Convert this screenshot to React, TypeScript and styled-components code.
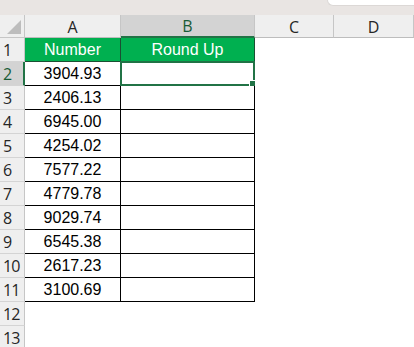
import React from 'react'
import styled, { createGlobalStyle, css } from 'styled-components'

const GlobalStyle = createGlobalStyle`
  html, body {
    margin: 0;
    padding: 0;
    background: #ffffff;
  }
  body {
    font-family: 'Liberation Sans', Arial, sans-serif;
    overflow: hidden;
  }
`

const green = '#217346'

const TopStrip = styled.div`
  height: 15px;
  background: #e9e5e3;
  display: flex;
  justify-content: flex-end;
  align-items: flex-start;
`

const SearchBox = styled.div`
  width: 86px;
  height: 5px;
  background: #ffffff;
  border: 1px solid #dcd8d6;
  border-top: none;
  border-right: none;
  border-bottom-left-radius: 6px;
`

const Sheet = styled.div`
  display: grid;
  grid-template-columns: 25px 96px 134px 79px 1fr;
  grid-template-rows: 23px repeat(13, 24px);
`

const Corner = styled.div`
  position: relative;
  background: #efefef;
  border-right: 1px solid #c6c6c6;
  border-bottom: 1px solid #c6c6c6;
  box-sizing: border-box;

  &::after {
    content: '';
    position: absolute;
    right: 3px;
    bottom: 3px;
    width: 0;
    height: 0;
    border-left: 14px solid transparent;
    border-bottom: 14px solid #bdbdbd;
  }
`

const ColHead = styled.div<{ $active?: boolean }>`
  box-sizing: border-box;
  display: flex;
  align-items: center;
  justify-content: center;
  font-family: 'Open Sans', 'Liberation Sans', sans-serif;
  font-size: 16px;
  color: #262626;
  background: #efefef;
  border-right: 1px solid #c6c6c6;
  border-bottom: 1px solid #bdbdbd;
  padding-top: 1px;

  ${p => p.$active && css`
    background: #d3d3d3;
    color: #185c37;
    border-bottom: 2px solid ${green};
  `}
`

const RowHead = styled.div<{ $active?: boolean }>`
  box-sizing: border-box;
  display: flex;
  align-items: center;
  padding-left: 3px;
  font-family: 'Open Sans', 'Liberation Sans', sans-serif;
  font-size: 16px;
  letter-spacing: -1px;
  color: #262626;
  background: #efefef;
  border-right: 1px solid #c6c6c6;
  border-bottom: 1px solid #d4d4d4;

  ${p => p.$active && css`
    background: #d3d3d3;
    color: #185c37;
    border-right: 2px solid ${green};
  `}
`

const Cell = styled.div<{ $kind?: 'head' | 'data' | 'blank' }>`
  position: relative;
  box-sizing: border-box;
  display: flex;
  align-items: center;
  justify-content: center;
  font-size: 16px;
  color: #000000;
  background: #ffffff;

  ${p => p.$kind === 'head' && css`
    background: #00b050;
    color: #ffffff;
    border-right: 1px solid #1b4f33;
    border-bottom: 1px solid #1b4f33;
  `}

  ${p => p.$kind === 'data' && css`
    border-right: 1px solid #000000;
    border-bottom: 1px solid #000000;
  `}
`

const Selection = styled.div`
  position: absolute;
  left: -1px;
  top: -1px;
  right: -1px;
  bottom: -1px;
  border: 2px solid ${green};
  pointer-events: none;
`

const FillHandle = styled.div`
  position: absolute;
  right: -3px;
  bottom: -3px;
  width: 5px;
  height: 5px;
  background: ${green};
  border: 1px solid #ffffff;
`

const values = [
  '3904.93', '2406.13', '6945.00', '4254.02', '7577.22',
  '4779.78', '9029.74', '6545.38', '2617.23', '3100.69',
]

const columns = ['A', 'B', 'C', 'D']

export default function App() {
  return (
    <>
      <GlobalStyle />
      <TopStrip>
        <SearchBox />
      </TopStrip>
      <Sheet>
        <Corner />
        {columns.map(c => (
          <ColHead key={c} $active={c === 'B'}>{c}</ColHead>
        ))}

        <RowHead>1</RowHead>
        <Cell $kind='head'>Number</Cell>
        <Cell $kind='head'>Round Up</Cell>
        <Cell />
        <Cell />

        {values.map((v, i) => (
          <React.Fragment key={v}>
            <RowHead $active={i === 0}>{i + 2}</RowHead>
            <Cell $kind='data'>{v}</Cell>
            <Cell $kind='data'>
              {i === 0 && (
                <Selection>
                  <FillHandle />
                </Selection>
              )}
            </Cell>
            <Cell />
            <Cell />
          </React.Fragment>
        ))}

        {[12, 13].map(n => (
          <React.Fragment key={n}>
            <RowHead>{n}</RowHead>
            <Cell />
            <Cell />
            <Cell />
            <Cell />
          </React.Fragment>
        ))}
      </Sheet>
    </>
  )
}
